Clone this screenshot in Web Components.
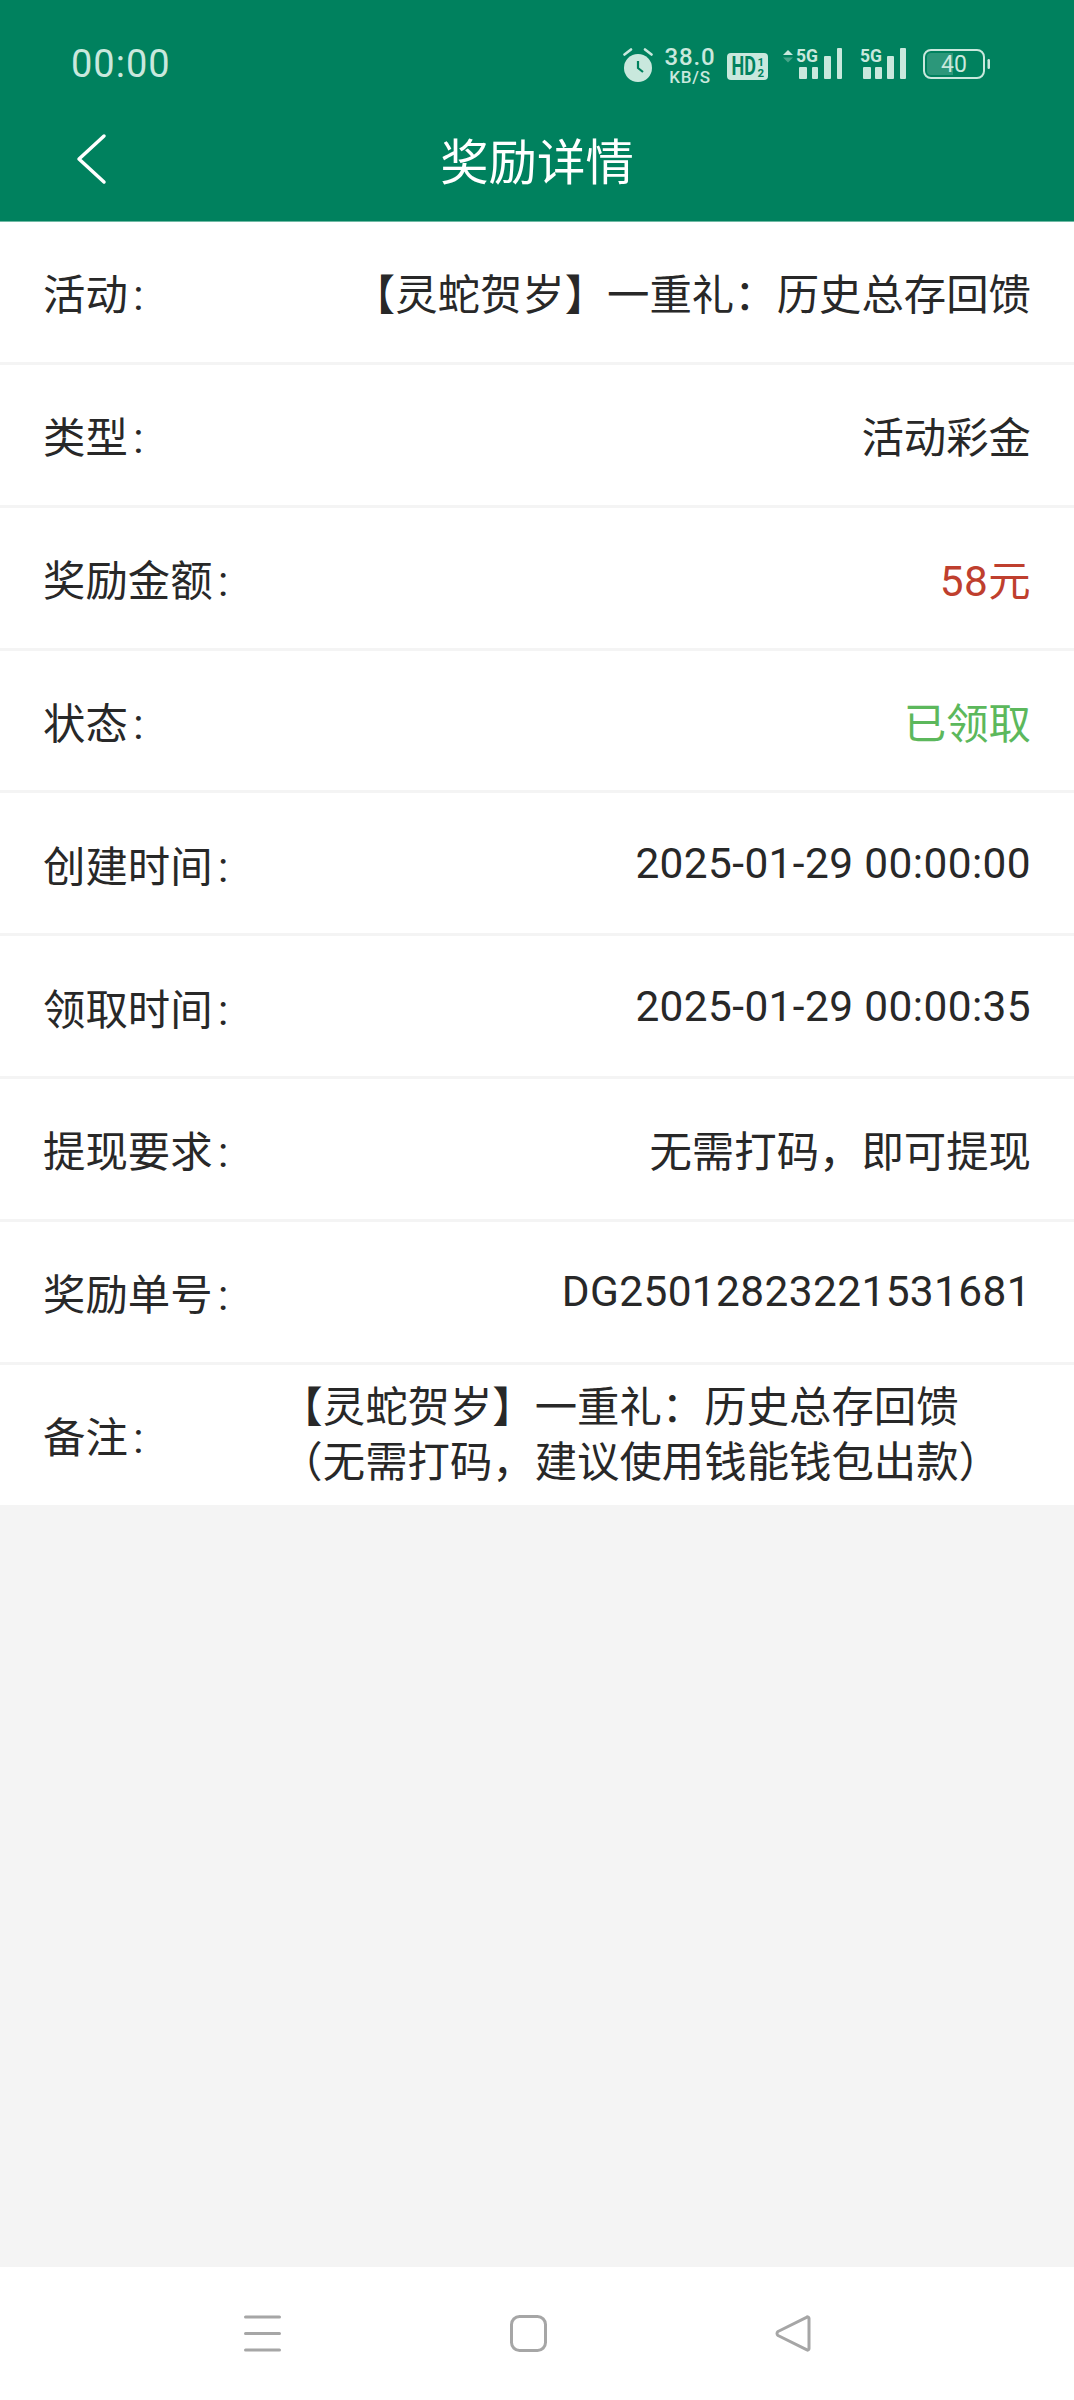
<!DOCTYPE html>
<html lang="zh">
<head>
<meta charset="utf-8">
<title>奖励详情</title>
<style>
    html, body { margin: 0; padding: 0; }
    body {
        width: 1074px;
        height: 2400px;
        display: flex;
        flex-direction: column;
        background: #f4f4f4;
        font-family: Roboto, 'Noto Sans CJK SC', sans-serif;
        overflow: hidden;
    }
    detail-list { flex: 1; }
</style>
</head>
<body>
<app-header title="奖励详情"></app-header>
<detail-list>
    <detail-row label="活动">【灵蛇贺岁】一重礼：历史总存回馈</detail-row>
    <detail-row label="类型">活动彩金</detail-row>
    <detail-row label="奖励金额" tone="red" num>58元</detail-row>
    <detail-row label="状态" tone="green">已领取</detail-row>
    <detail-row label="创建时间" num>2025-01-29 00:00:00</detail-row>
    <detail-row label="领取时间" num>2025-01-29 00:00:35</detail-row>
    <detail-row label="提现要求">无需打码，即可提现</detail-row>
    <detail-row label="奖励单号" num>DG25012823221531681</detail-row>
    <detail-row label="备注" note>【灵蛇贺岁】一重礼：历史总存回馈<br>（无需打码，建议使用钱能钱包出款）</detail-row>
</detail-list>
<nav-bar></nav-bar>

<script>
class StatusBar extends HTMLElement {
    constructor() {
        super();
        this.attachShadow({ mode: 'open' });
    }

    connectedCallback() {
        this.shadowRoot.innerHTML = `
        <style>
            :host {
                display: flex;
                align-items: flex-start;
                box-sizing: border-box;
                height: 97px;
                padding: 48px 84px 0 71px;
                color: #c9e8dd;
                font-family: Roboto, sans-serif;
            }
            .time { font-size: 38px; line-height: 32px; letter-spacing: 1px; }
            .icons {
                margin-left: auto;
                display: flex;
                align-items: flex-start;
            }
            .speed {
                display: flex;
                flex-direction: column;
                align-items: center;
                width: 50px;
                margin: -3px 12px 0;
                font-weight: 500;
            }
            .speed b { font-weight: 500; font-size: 24px; line-height: 24px; letter-spacing: 0.8px; }
            .speed span { font-size: 17px; line-height: 16px; letter-spacing: 0.8px; }
            svg { display: block; }
            svg text { font-family: Roboto, sans-serif; fill: #c9e8dd; }
            svg text.dark { fill: #00815e; }
            .hd { margin-top: 5px; }
            .sig1 { margin: -6px 0 0 15px; }
            .sig2 { margin: -6px 0 0 18px; }
            .bat { margin: 1px 0 0 17px; }
        </style>
        <span class="time">00:00</span>
        <div class="icons">
            <svg width="30" height="34" viewBox="0 0 30 34">
                <circle cx="15" cy="20" r="14" fill="#c9e8dd"/>
                <path d="M15 13v7l5 4" fill="none" stroke="#00815e" stroke-width="2.2"/>
                <path d="M1.500 6.500L8 1.500M28.500 6.500L22 1.500" stroke="#c9e8dd" stroke-width="2.600" stroke-linecap="round"/>
            </svg>
            <div class="speed"><b>38.0</b><span>KB/S</span></div>
            <svg class="hd" width="41" height="27" viewBox="0 0 41 27">
                <rect width="41" height="27" rx="4" fill="#c9e8dd"/>
                <text class="dark" transform="translate(4.500 22) scale(1 1.4)" font-size="18" font-weight="700">HD</text>
                <text class="dark" x="30.500" y="13" font-size="11.500" font-weight="700">1</text>
                <text class="dark" x="30.500" y="24" font-size="11.500" font-weight="700">2</text>
            </svg>
            <svg class="sig1" width="59" height="37" viewBox="0 -6 59 37">
                <path d="M0 7l5-5 5 5z" fill="#c9e8dd"/>
                <path d="M0 9.500l5 5 5-5z" fill="#c9e8dd" opacity=".35"/>
                <text x="13" y="14" font-size="19" font-weight="700" textLength="22" lengthAdjust="spacingAndGlyphs">5G</text>
                <rect x="16" y="19" width="8" height="12" rx="1" fill="#c9e8dd"/>
                <rect x="29" y="19" width="6" height="12" rx="1" fill="#c9e8dd"/>
                <rect x="41" y="8" width="7" height="23" rx="1" fill="#c9e8dd"/>
                <rect x="54" y="0" width="5" height="31" rx="1" fill="#c9e8dd"/>
            </svg>
            <svg class="sig2" width="46" height="37" viewBox="0 -6 46 37">
                <text x="0" y="14" font-size="19" font-weight="700" textLength="22" lengthAdjust="spacingAndGlyphs">5G</text>
                <rect x="3" y="19" width="8" height="12" rx="1" fill="#c9e8dd"/>
                <rect x="15" y="19" width="7" height="12" rx="1" fill="#c9e8dd"/>
                <rect x="27" y="8" width="7" height="23" rx="1" fill="#c9e8dd"/>
                <rect x="40" y="0" width="6" height="31" rx="1" fill="#c9e8dd"/>
            </svg>
            <svg class="bat" width="67" height="30" viewBox="0 0 67 30">
                <rect x="1" y="1" width="60" height="28" rx="7" fill="none" stroke="#c9e8dd" stroke-width="2"/>
                <path d="M8 4h22v22H8a4 4 0 0 1-4-4V8a4 4 0 0 1 4-4z" fill="#c9e8dd" opacity=".22"/>
                <rect x="64.500" y="10" width="2.500" height="10" rx="1.200" fill="#c9e8dd"/>
                <text x="31" y="23" font-size="23" text-anchor="middle">40</text>
            </svg>
        </div>
        `;
    }
}

class AppHeader extends HTMLElement {
    constructor() {
        super();
        this.attachShadow({ mode: 'open' });
    }

    connectedCallback() {
        this.shadowRoot.innerHTML = `
        <style>
            :host {
                display: block;
                box-sizing: border-box;
                height: 222px;
                background: #00815e;
                border-bottom: 1px solid #6fb9a4;
            }
            .bar {
                display: flex;
                align-items: center;
                justify-content: center;
                position: relative;
                height: 124px;
                color: #fff;
                font-size: 48.4px;
                font-family: Roboto, 'Noto Sans CJK SC', sans-serif;
            }
            svg { position: absolute; left: 76px; top: 36px; }
        </style>
        <status-bar></status-bar>
        <div class="bar">
            <svg width="32" height="52" viewBox="0 0 32 52">
                <path d="M28 3L3 26l25 23" fill="none" stroke="#fff" stroke-width="3.500" stroke-linecap="round" stroke-linejoin="round"/>
            </svg>
            <span>${this.getAttribute('title')}</span>
        </div>
        `;
    }
}

class DetailList extends HTMLElement {
    constructor() {
        super();
        this.attachShadow({ mode: 'open' });
        this.shadowRoot.innerHTML = `
        <style>
            :host { display: block; }
        </style>
        <slot></slot>
        `;
    }
}

class DetailRow extends HTMLElement {
    constructor() {
        super();
        this.attachShadow({ mode: 'open' });
    }

    connectedCallback() {
        this.shadowRoot.innerHTML = `
        <style>
            :host {
                display: flex;
                align-items: center;
                justify-content: space-between;
                box-sizing: border-box;
                height: 142.857px;
                padding: 0 43px;
                background: #fff;
                border-bottom: 3px solid #f4f4f4;
                color: #282828;
                font-size: 42.4px;
                font-family: Roboto, 'Noto Sans CJK SC', sans-serif;
            }
            /* colon sits in a half-width box in the original font */
            .colon { display: inline-block; width: 21px; text-align: center; }
            :host([note]) { height: 140px; border-bottom: 0; padding-right: 73px; }
            :host([note]) .value { line-height: 55px; }
            :host([num]) .value { letter-spacing: 0.4px; }
            :host([tone="red"]) .value { color: #bf3f2e; }
            :host([tone="green"]) .value { color: #5cb85c; }
        </style>
        <span class="label">${this.getAttribute('label')}<span class="colon">:</span></span>
        <span class="value"><slot></slot></span>
        `;
    }
}

class NavBar extends HTMLElement {
    constructor() {
        super();
        this.attachShadow({ mode: 'open' });
        this.shadowRoot.innerHTML = `
        <style>
            :host {
                display: flex;
                justify-content: space-between;
                align-items: center;
                height: 133px;
                box-sizing: border-box;
                padding: 0 263px 0 244px;
                background: #fff;
            }
            svg { display: block; }
        </style>
        <svg width="37" height="37" viewBox="0 0 37 37">
            <path d="M1.500 2h34M1.500 18.500h34M1.500 35h34" stroke="#a6a6a6" stroke-width="3" stroke-linecap="round" fill="none"/>
        </svg>
        <svg width="37" height="37" viewBox="0 0 37 37">
            <rect x="1.500" y="1.500" width="34" height="34" rx="8" fill="none" stroke="#a6a6a6" stroke-width="3"/>
        </svg>
        <svg width="36" height="37" viewBox="0 0 36 37">
            <path d="M34 3.500v30a1.500 1.500 0 0 1-2.500 1.200L3 20.500a2.500 2.500 0 0 1 0-4L31.500 2.300A1.500 1.500 0 0 1 34 3.500z" fill="none" stroke="#a6a6a6" stroke-width="3" stroke-linejoin="round"/>
        </svg>
        `;
    }
}

customElements.define('status-bar', StatusBar);
customElements.define('app-header', AppHeader);
customElements.define('detail-list', DetailList);
customElements.define('detail-row', DetailRow);
customElements.define('nav-bar', NavBar);
</script>
</body>
</html>
